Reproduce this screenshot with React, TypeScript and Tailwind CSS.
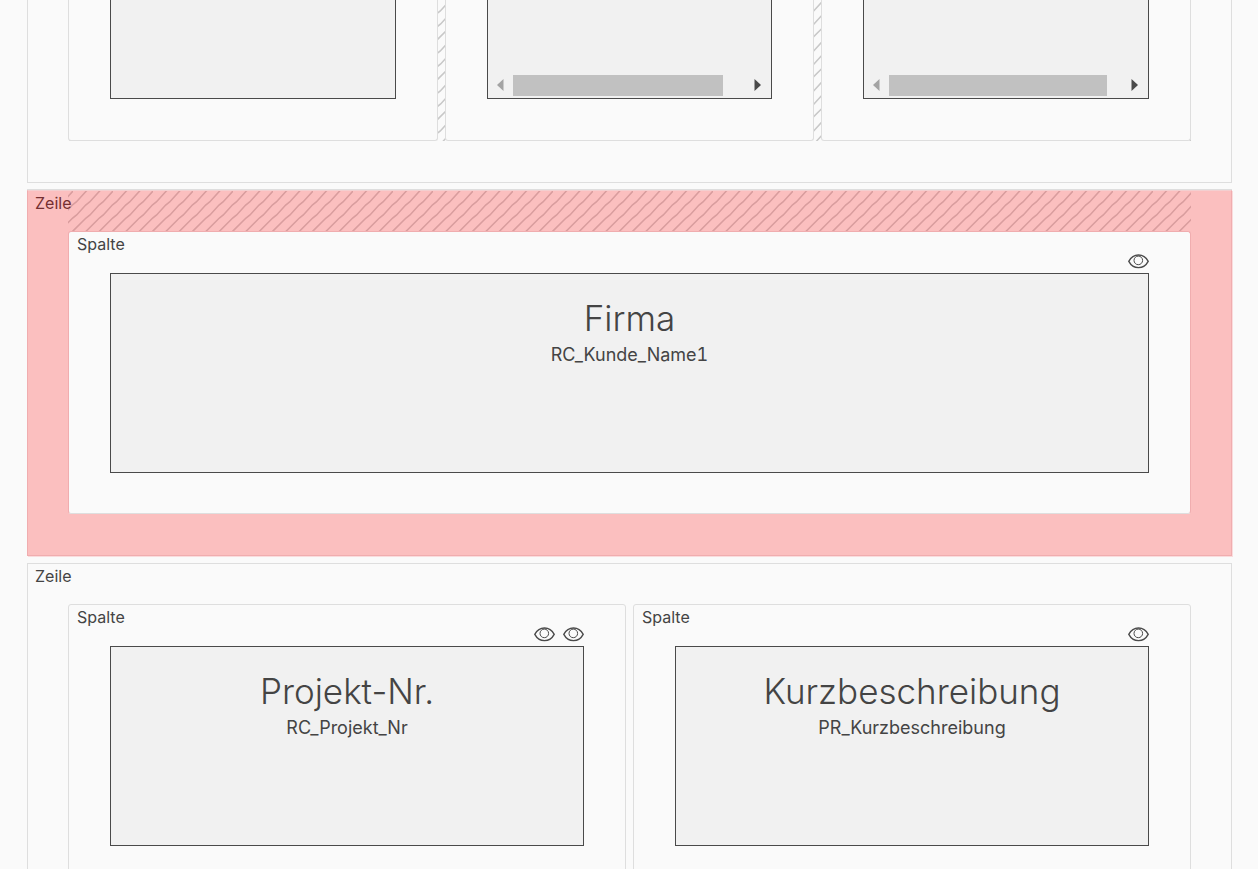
import type { ReactNode } from "react";

function Eye() {
  return (
    <svg width="21" height="15" viewBox="0 0 21 15" fill="none" stroke="#4a4a4a" strokeWidth="1.4" aria-hidden="true">
      <path d="M0.8 7.3C3 3.2 6.4 1 10.5 1s7.5 2.2 9.7 6.3c-2.2 4.1-5.6 6.3-9.7 6.3S3 11.4 0.8 7.3Z" />
      <circle cx="10.3" cy="6.4" r="4.3" strokeWidth="1" />
    </svg>
  );
}

const HATCH_STARTS = [13.33, 26.67, 40, 53.33, 66.67, 80];

function Hatch({ id, className, stroke, shift }: { id: string; className: string; stroke: string; shift: number }) {
  return (
    <svg className={className} aria-hidden="true">
      <defs>
        <pattern id={id} x={shift} width="40" height="40" patternUnits="userSpaceOnUse">
          <path
            d={HATCH_STARTS.map((x) => `M${x} 0l-10 11l-4 3l-9 10l-4 3l-13 13`).join("")}
            stroke={stroke}
            strokeWidth="1.6"
            strokeLinecap="square"
            fill="none"
          />
        </pattern>
      </defs>
      <rect width="100%" height="100%" fill={`url(#${id})`} />
    </svg>
  );
}

function Field({ title, name, eyes = 1, selected = false }: { title: string; name: string; eyes?: number; selected?: boolean }) {
  return (
    <div
      className={
        selected
          ? "relative min-w-0 flex-1 rounded-[3px] border border-[#f0adaf] border-b-[#dedede] bg-[#fafafa] p-[41px] pb-10"
          : "relative min-w-0 flex-1 rounded-[3px] border border-[#dedede] bg-[#fafafa] p-[41px]"
      }
    >
      <span className="absolute top-0 left-2 text-base leading-6">Spalte</span>
      <div className="absolute top-[22px] right-[41px] flex gap-2">
        {Array.from({ length: eyes }, (_, i) => (
          <button key={i} type="button" aria-label="Sichtbarkeit" className="block">
            <Eye />
          </button>
        ))}
      </div>
      <div className="h-[200px] border border-[#4a4a4a] bg-[#f1f1f1] pt-5 text-center">
        <h2 className="mb-px text-[35px] leading-12 font-light">{title}</h2>
        <p className="text-lg leading-6 tabular-nums">{name}</p>
      </div>
    </div>
  );
}

function Zeile({ children, selected = false }: { children: ReactNode; selected?: boolean }) {
  return (
    <section
      className={
        selected
          ? "relative border border-[#f0adaf] border-t-[#f3cfd0] bg-[#fbbfbf] p-10 pb-[41px] shadow-[1px_1px_0_#fadcdd,0_-1px_0_#dedede]"
          : "relative border border-[#dedede] p-10"
      }
    >
      {selected && (
        <Hatch id="hatch-row" shift={5} className="absolute top-0 left-10 h-10 w-[calc(100%-80px)]" stroke="#d99d9e" />
      )}
      <span
        className={
          selected
            ? "absolute top-0 left-[7px] text-base leading-6 text-[#742f31]"
            : "absolute top-0 left-[7px] text-base leading-6"
        }
      >
        Zeile
      </span>
      <div className="flex gap-[7px]">{children}</div>
    </section>
  );
}

function ScrollPanel({ thumb }: { thumb?: string }) {
  return (
    <div className="min-w-0 flex-1 rounded-b-[3px] border border-t-0 border-[#dedede] bg-[#fafafa] px-[41px] pb-[41px]">
      <div className="flex h-[99px] flex-col justify-end border border-t-0 border-[#4a4a4a] bg-[#f1f1f1]">
        {thumb && (
          <div className="flex h-[25px] items-center pb-px">
            <button type="button" aria-label="Nach links" className="flex w-[25px] shrink-0 justify-center">
              <svg width="7" height="12" viewBox="0 0 7 12"><path d="M6.5 0v12L0 6Z" fill="#a3a3a3" /></svg>
            </button>
            <div className="min-w-0 flex-1">
              <div className={thumb} />
            </div>
            <button type="button" aria-label="Nach rechts" className="flex w-[27px] shrink-0 justify-center">
              <svg width="7" height="12" viewBox="0 0 7 12"><path d="M0.5 0v12L7 6Z" fill="#4a4a4a" /></svg>
            </button>
          </div>
        )}
      </div>
    </div>
  );
}

export default function App() {
  return (
    <main className="h-screen overflow-hidden bg-[#fafafa] pr-[26px] pl-[27px] font-['Inter',sans-serif] text-[#444]">
      <div className="flex flex-col gap-[7px]">
        <section className="border border-t-0 border-[#dedede] px-10 pb-[41px]">
          <div className="relative">
            <Hatch id="hatch-gap" shift={9} className="absolute inset-0 h-full w-full" stroke="#c8c8c8" />
            <div className="relative flex gap-[7px]">
              <ScrollPanel />
              <ScrollPanel thumb="h-[21px] w-[91%] bg-[#c1c1c1]" />
              <ScrollPanel thumb="h-[21px] w-[94%] bg-[#c1c1c1]" />
            </div>
          </div>
        </section>
        <Zeile selected>
          <Field title="Firma" name="RC_Kunde_Name1" selected />
        </Zeile>
        <Zeile>
          <Field title="Projekt-Nr." name="RC_Projekt_Nr" eyes={2} />
          <Field title="Kurzbeschreibung" name="PR_Kurzbeschreibung" />
        </Zeile>
      </div>
    </main>
  );
}
